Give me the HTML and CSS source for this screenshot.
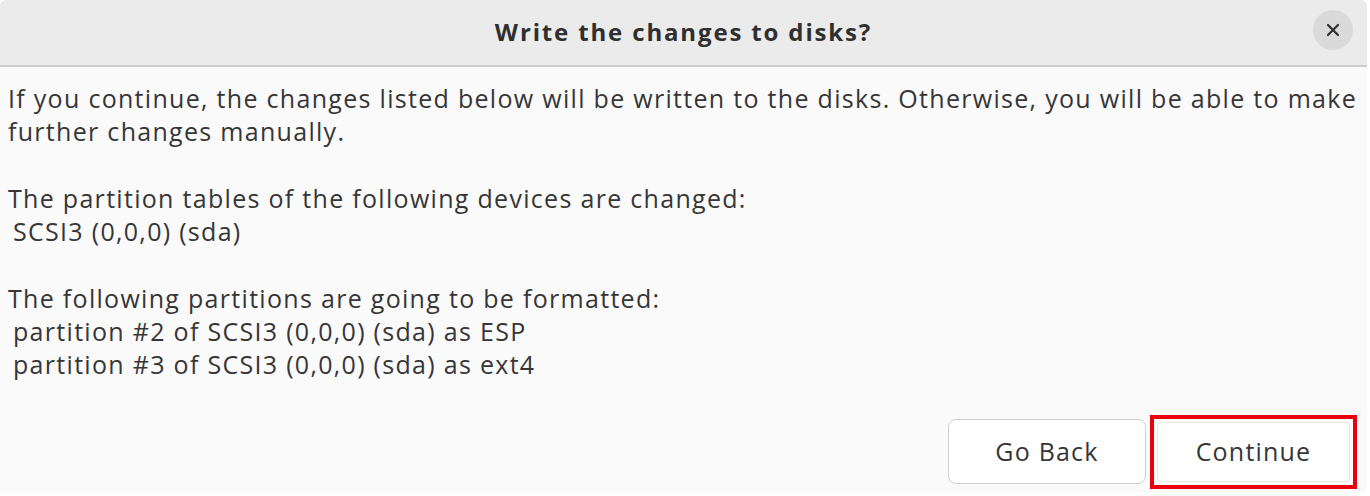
FILE: index.html
```html
<!DOCTYPE html>
<html>
<head>
<meta charset="utf-8">
<link rel="stylesheet" href="styles.css">
</head>
<body>
<div class="window">
  <header class="titlebar">
    <h1 class="title">Write the changes to disks?</h1>
    <button class="close" aria-label="Close">
      <svg width="16" height="16" viewBox="0 0 16 16"><path d="M3 3 L13 13 M13 3 L3 13" stroke="#2e2e2e" stroke-width="2.2" stroke-linecap="round"/></svg>
    </button>
  </header>
  <main class="content">
    <p class="para">If you continue, the changes listed below will be written to the disks. Otherwise, you will be able to make further changes manually.</p>
    <p class="para">The partition tables of the following devices are changed:<br><span class="indent">SCSI3 (0,0,0) (sda)</span></p>
    <p class="para">The following partitions are going to be formatted:<br><span class="indent">partition #2 of SCSI3 (0,0,0) (sda) as ESP</span><br><span class="indent">partition #3 of SCSI3 (0,0,0) (sda) as ext4</span></p>
  </main>
  <footer class="actions">
    <button class="btn">Go Back</button>
    <div class="highlight"><button class="btn btn-inner">Continue</button></div>
  </footer>
</div>
</body>
</html>
```
FILE: styles.css
```css
html, body {
  margin: 0;
  padding: 0;
  background: #ffffff;
}
body {
  font-family: "Open Sans", "Noto Sans", sans-serif;
  color: #363636;
}
.window {
  width: 1367px;
  height: 492px;
  background: #fafafa;
  display: flex;
  flex-direction: column;
  border-top-left-radius: 6px;
  border-top-right-radius: 6px;
  overflow: hidden;
}
.titlebar {
  height: 65px;
  flex: none;
  background: #ebebeb;
  border-bottom: 2px solid #cdcdcd;
  display: flex;
  align-items: center;
  justify-content: center;
  position: relative;
}
.title {
  margin: 0 0 2px 0;
  font-size: 24px;
  font-weight: 700;
  color: #2f2f2f;
  letter-spacing: 1.85px;
}
.close {
  position: absolute;
  right: 14px;
  top: 10px;
  width: 40px;
  height: 40px;
  border-radius: 50%;
  border: none;
  background: #dadada;
  display: flex;
  align-items: center;
  justify-content: center;
  padding: 0;
}
.content {
  flex: 1;
  padding: 15px 8px 0 8px;
  font-size: 25px;
  line-height: 33.3px;
  letter-spacing: 1.3px;
}
.para {
  margin: 0 0 33.3px 0;
}
.indent {
  padding-left: 5px;
}
.actions {
  display: flex;
  justify-content: flex-end;
  align-items: center;
  gap: 4px;
  padding: 0 10px 7px 0;
}
.btn {
  font-family: inherit;
  font-size: 25px;
  letter-spacing: 1.2px;
  color: #363636;
  background: #ffffff;
  border: 1px solid #cfcfcf;
  border-radius: 8px;
  width: 198px;
  height: 65px;
  padding: 0 0 2px 0;
}
.highlight {
  border: 4px solid #e8000e;
  padding: 3px;
  display: flex;
}
.btn-inner {
  width: 193px;
  height: 60px;
  border-radius: 4px;
  border-color: #e6e6e6;
}
```
